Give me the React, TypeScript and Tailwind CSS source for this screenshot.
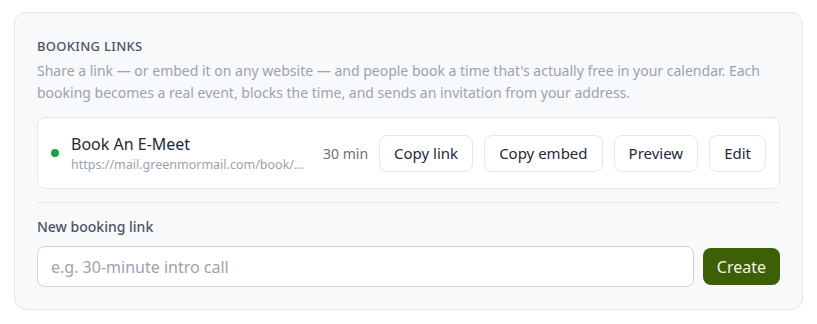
export default function App() {
  return (
    <div className="min-h-screen bg-white px-[14px] pt-[12px] font-['Noto_Sans',sans-serif]">
      <section className="w-[789px] rounded-[12px] border border-[#e5e7eb] bg-[#f8f9fb] px-[22px] pt-[23px] pb-[22px]">
        <h2 className="text-[13px] font-medium uppercase leading-[20px] tracking-[0.3px] text-[#4b5563]">
          Booking links
        </h2>
        <p className="mt-[4px] text-[14px] leading-[22px] text-[#9ca3af]">
          Share a link — or embed it on any website — and people book a time that's actually free in your calendar. Each
          booking becomes a real event, blocks the time, and sends an invitation from your address.
        </p>

        <div className="mt-[13px] flex h-[72px] items-center rounded-[8px] border border-[#e5e7eb] bg-white pl-[13px] pr-[13px]">
          <span className="h-[8px] w-[8px] shrink-0 rounded-full bg-[#16a34a]" />
          <div className="ml-[12px] min-w-0 flex-1">
            <div className="text-[16px] leading-[22px] text-[#1f2937]">Book An E-Meet</div>
            <div className="mt-[1px] max-w-[234px] truncate text-[12.5px] leading-[18px] text-[#9ca3af]">
              https://mail.greenmormail.com/book/e-meet
            </div>
          </div>
          <span className="ml-[14px] text-[14px] text-[#6b7280]">30 min</span>
          <div className="ml-[11px] flex gap-[11px]">
            <button className="h-[37px] rounded-[8px] border border-[#e5e7eb] bg-white px-[14px] text-[15px] text-[#1f2937]">
              Copy link
            </button>
            <button className="h-[37px] rounded-[8px] border border-[#e5e7eb] bg-white px-[14px] text-[15px] text-[#1f2937]">
              Copy embed
            </button>
            <button className="h-[37px] rounded-[8px] border border-[#e5e7eb] bg-white px-[14px] text-[15px] text-[#1f2937]">
              Preview
            </button>
            <button className="h-[37px] rounded-[8px] border border-[#e5e7eb] bg-white px-[14px] text-[15px] text-[#1f2937]">
              Edit
            </button>
          </div>
        </div>

        <div className="mt-[13px] border-t border-[#e5e7eb]" />

        <label className="mt-[14px] block text-[14px] font-medium leading-[20px] text-[#4b5563]">New booking link</label>
        <div className="mt-[9px] flex items-center gap-[9px]">
          <input
            className="h-[41px] flex-1 rounded-[8px] border border-[#d1d5db] bg-white px-[13px] text-[16px] text-[#1f2937] outline-none placeholder:text-[#9ca3af]"
            placeholder="e.g. 30-minute intro call"
          />
          <button className="h-[37px] rounded-[8px] bg-[#3d5f06] px-[14px] text-[16px] text-[#eef4e2]">Create</button>
        </div>
      </section>
    </div>
  )
}
